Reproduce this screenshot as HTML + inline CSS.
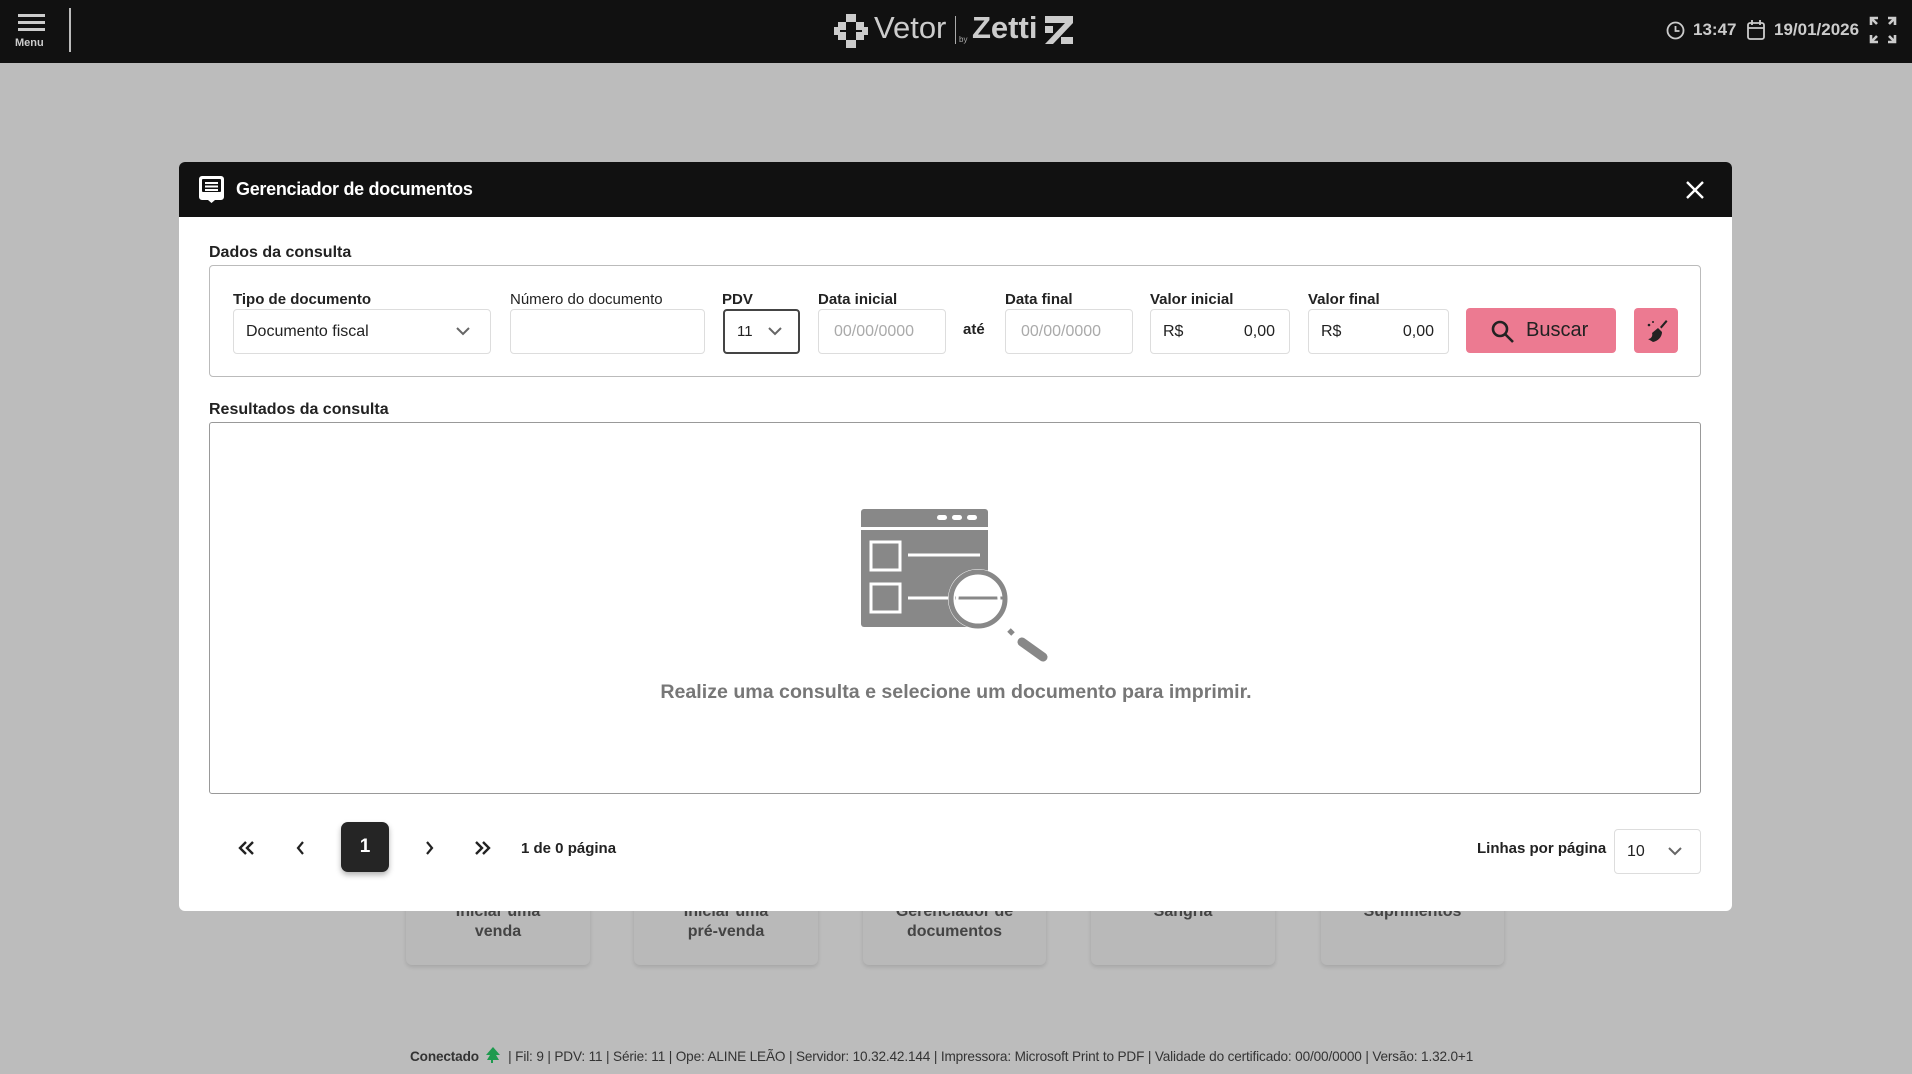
<!DOCTYPE html>
<html><head><meta charset="utf-8"><style>
*{box-sizing:border-box;margin:0;padding:0}
body{width:1912px;height:1074px;background:#bcbcbc;font-family:"Liberation Sans",sans-serif;position:relative;overflow:hidden;color:#222}
.abs{position:absolute}
.hdr{left:0;top:0;width:1912px;height:63px;background:#111}
.card{background:#b9b9b9;border-radius:6px;box-shadow:0 2px 4px rgba(0,0,0,.12);text-align:center;font-weight:bold;font-size:16px;color:#444;line-height:20px}
.modal{left:179px;top:162px;width:1553px;height:749px;background:#fff;border-radius:6px;overflow:hidden}
.mh{left:0;top:0;width:1553px;height:55px;background:#111}
.lbl{font-size:15px;font-weight:bold;color:#222}
.fld{border:1px solid #ddd;border-radius:4px;height:45px;top:309px;font-size:16px;color:#222;line-height:43px;padding-left:12px}
.ph{color:#aaa}
</style></head><body>
<div class="abs hdr">
  <div class="abs" style="left:18px;top:14px;width:27px;height:3px;background:#ccc"></div>
  <div class="abs" style="left:18px;top:21px;width:27px;height:3px;background:#ccc"></div>
  <div class="abs" style="left:18px;top:28px;width:27px;height:3px;background:#ccc"></div>
  <div class="abs" style="left:15px;top:37px;font-size:11px;color:#ccc;font-weight:bold">Menu</div>
  <div class="abs" style="left:69px;top:8px;width:2px;height:44px;background:#bbb"></div>
  <svg class="abs" style="left:834px;top:14px" width="34" height="34" viewBox="0 0 34 34" fill="#ccc"><rect x="12" y="0" width="10" height="8"/><rect x="4" y="8" width="8" height="8"/><rect x="22" y="8" width="8" height="8"/><rect x="0" y="13" width="6" height="8"/><rect x="28" y="13" width="6" height="8"/><rect x="4" y="18" width="8" height="8"/><rect x="22" y="18" width="8" height="8"/><rect x="12" y="26" width="10" height="8"/></svg>
  <div class="abs" style="left:874px;top:10px;font-size:31px;color:#ccc;letter-spacing:0px">Vetor</div>
  <div class="abs" style="left:955px;top:16px;width:1px;height:28px;background:#aaa"></div>
  <div class="abs" style="left:959px;top:35px;font-size:8px;color:#aaa">by</div>
  <div class="abs" style="left:972px;top:10px;font-size:31px;color:#ccc;font-weight:bold">Zetti</div>
  <svg class="abs" style="left:1045px;top:16px" width="28" height="28" viewBox="0 0 28 28" fill="#ccc"><rect x="0" y="0" width="28" height="7"/><path d="M20 7h8L8 28H0z"/><rect x="0" y="10" width="8" height="7"/><rect x="16" y="21" width="12" height="7"/></svg>
  <svg class="abs" style="left:1666px;top:21px" width="19" height="19" viewBox="0 0 19 19" fill="none" stroke="#ccc" stroke-width="1.8"><circle cx="9.5" cy="9.5" r="8"/><path d="M9.5 5v5h4"/></svg>
  <div class="abs" style="left:1693px;top:20px;font-size:17px;font-weight:bold;color:#ccc">13:47</div>
  <svg class="abs" style="left:1747px;top:20px" width="18" height="20" viewBox="0 0 18 20" fill="none" stroke="#ccc" stroke-width="1.8"><rect x="1" y="3" width="16" height="16" rx="2"/><path d="M1 8h16M5 0v5M13 0v5"/></svg>
  <div class="abs" style="left:1774px;top:20px;font-size:17px;font-weight:bold;color:#ccc">19/01/2026</div>
  <svg class="abs" style="left:1869px;top:16px" width="28" height="28" viewBox="0 0 28 28" fill="none" stroke="#ccc" stroke-width="2.6"><path d="M2 9V2h7M2 2l6 6M19 2h7v7M26 2l-6 6M2 19v7h7M2 26l6-6M26 19v7h-7M26 26l-6-6"/></svg>
</div>

<div class="abs card" style="left:406px;top:890px;width:184px;height:75px;padding-top:12px">Iniciar uma<br>venda</div>
<div class="abs card" style="left:634px;top:890px;width:184px;height:75px;padding-top:12px">Iniciar uma<br>pré-venda</div>
<div class="abs card" style="left:863px;top:890px;width:183px;height:75px;padding-top:12px">Gerenciador de<br>documentos</div>
<div class="abs card" style="left:1091px;top:890px;width:184px;height:75px;padding-top:12px">Sangria</div>
<div class="abs card" style="left:1321px;top:890px;width:183px;height:75px;padding-top:12px">Suprimentos</div>

<div class="abs" style="left:410px;top:1046px;font-size:13.6px;letter-spacing:-0.15px;color:#333;white-space:nowrap"><b>Conectado</b> <span style="display:inline-block;width:22px;height:16px;vertical-align:-3px"><svg width="20" height="18" viewBox="0 0 20 18"><path d="M10 1L3 9h4l-3 5h12l-3-5h4z" fill="#1e9a4e"/><path d="M9 13v4" stroke="#1e9a4e" stroke-width="2"/></svg></span> | Fil: 9 | PDV: 11 | Série: 11 | Ope: ALINE LEÃO | Servidor: 10.32.42.144 | Impressora: Microsoft Print to PDF | Validade do certificado: 00/00/0000 | Versão: 1.32.0+1</div>

<div class="abs modal">
  <div class="abs mh">
    <svg class="abs" style="left:20px;top:14px" width="25" height="27" viewBox="0 0 25 27"><path d="M3 0h19a3 3 0 0 1 3 3v18a3 3 0 0 1-3 3h-6l-3.5 3-3.5-3H3a3 3 0 0 1-3-3V3a3 3 0 0 1 3-3z" fill="#fff"/><rect x="3" y="3" width="19" height="13" rx="1" fill="#111"/><path d="M6 7h13M6 10.5h13M6 14h13" stroke="#fff" stroke-width="2"/></svg>
    <div class="abs" style="left:57px;top:17px;font-size:18px;font-weight:bold;color:#fff;letter-spacing:-0.3px">Gerenciador de documentos</div>
    <svg class="abs" style="left:1507px;top:19px" width="18" height="18" viewBox="0 0 18 18" stroke="#fff" stroke-width="2.4"><path d="M1 1l16 16M17 1L1 17"/></svg>
  </div>
</div>
<div class="abs lbl" style="left:209px;top:244px;font-size:16px">Dados da consulta</div>
<div class="abs" style="left:209px;top:265px;width:1492px;height:112px;border:1px solid #bbb;border-radius:4px"></div>
<div class="abs lbl" style="left:233px;top:291px">Tipo de documento</div>
<div class="abs lbl" style="left:510px;top:291px;font-weight:normal">Número do documento</div>
<div class="abs lbl" style="left:722px;top:291px">PDV</div>
<div class="abs lbl" style="left:818px;top:291px">Data inicial</div>
<div class="abs lbl" style="left:1005px;top:291px">Data final</div>
<div class="abs lbl" style="left:1150px;top:291px">Valor inicial</div>
<div class="abs lbl" style="left:1308px;top:291px">Valor final</div>
<div class="abs fld" style="left:233px;width:258px">Documento fiscal<svg class="abs" style="right:20px;top:17px" width="14" height="9" viewBox="0 0 14 9" fill="none" stroke="#666" stroke-width="2"><path d="M1 1l6 6 6-6"/></svg></div>
<div class="abs fld" style="left:510px;width:195px"></div>
<div class="abs fld" style="left:723px;width:77px;border:2px solid #444;line-height:41px;font-size:15px">11<svg class="abs" style="right:16px;top:16px" width="14" height="9" viewBox="0 0 14 9" fill="none" stroke="#666" stroke-width="2"><path d="M1 1l6 6 6-6"/></svg></div>
<div class="abs fld ph" style="left:818px;width:128px;padding-left:15px">00/00/0000</div>
<div class="abs lbl" style="left:963px;top:321px">até</div>
<div class="abs fld ph" style="left:1005px;width:128px;padding-left:15px">00/00/0000</div>
<div class="abs fld" style="left:1150px;width:140px">R$<span style="position:absolute;right:14px">0,00</span></div>
<div class="abs fld" style="left:1308px;width:141px">R$<span style="position:absolute;right:14px">0,00</span></div>
<div class="abs" style="left:1466px;top:308px;width:150px;height:45px;background:#ec7a91;border-radius:4px;font-size:20px;color:#222;line-height:45px;padding-left:60px">Buscar<svg class="abs" style="left:25px;top:12px" width="24" height="24" viewBox="0 0 24 24" fill="none" stroke="#222" stroke-width="2.6"><circle cx="9" cy="9" r="7"/><path d="M14 14l8 8"/></svg></div>
<div class="abs" style="left:1634px;top:308px;width:44px;height:45px;background:#ec7a91;border-radius:4px"><svg class="abs" style="left:11px;top:11px" width="24" height="24" viewBox="0 0 24 24" fill="#222"><path d="M21 1l1.5 1.5-6 7-1.5-1.5z"/><path d="M13 9l4 4c0 5-4 9-9 10L3 20c3 0 5-3 4-6z"/><circle cx="4" cy="6" r="1.3"/><circle cx="8" cy="3" r="1"/></svg></div>

<div class="abs lbl" style="left:209px;top:401px;font-size:16px">Resultados da consulta</div>
<div class="abs" style="left:209px;top:422px;width:1492px;height:372px;border:1px solid #999;border-radius:3px"></div>
<svg class="abs" style="left:858px;top:505px" width="195" height="160" viewBox="858 505 195 160">
  <rect x="861" y="509" width="127" height="118" rx="3" fill="#888"/>
  <rect x="861" y="527" width="127" height="3" fill="#fff"/>
  <rect x="937" y="515" width="10" height="5" rx="2.5" fill="#fff"/><rect x="952" y="515" width="10" height="5" rx="2.5" fill="#fff"/><rect x="967" y="515" width="10" height="5" rx="2.5" fill="#fff"/>
  <rect x="871" y="542" width="29" height="28" fill="none" stroke="#fff" stroke-width="3"/>
  <rect x="871" y="584" width="29" height="28" fill="none" stroke="#fff" stroke-width="3"/>
  <path d="M908 555h72M908 598h72" stroke="#fff" stroke-width="3"/>
  <circle cx="978" cy="599" r="30" fill="#fff"/>
  <circle cx="978" cy="599" r="27" fill="none" stroke="#888" stroke-width="5"/>
  <path d="M955 598h49" stroke="#888" stroke-width="3"/>
  <circle cx="978" cy="599" r="21" fill="none" stroke="#fff" stroke-width="3"/>
  <path d="M1009 630l4 4" stroke="#888" stroke-width="5"/>
  <path d="M1022 642l21 15" stroke="#888" stroke-width="9" stroke-linecap="round"/>
</svg>
<div class="abs" style="left:0;width:1912px;top:681px;text-align:center;font-size:19.6px;font-weight:bold;color:#777">Realize uma consulta e selecione um documento para imprimir.</div>

<svg class="abs" style="left:237px;top:840px" width="18" height="16" viewBox="0 0 18 16" fill="none" stroke="#222" stroke-width="2.4"><path d="M9 2L3 8l6 6M16 2l-6 6 6 6"/></svg>
<svg class="abs" style="left:296px;top:841px" width="10" height="14" viewBox="0 0 10 14" fill="none" stroke="#222" stroke-width="2.2"><path d="M7 1L2 7l5 6"/></svg>
<div class="abs" style="left:341px;top:822px;width:48px;height:50px;background:#252525;border-radius:7px;box-shadow:0 3px 6px rgba(0,0,0,.3);color:#fff;font-size:19px;font-weight:bold;text-align:center;line-height:50px">1</div>
<svg class="abs" style="left:424px;top:841px" width="10" height="14" viewBox="0 0 10 14" fill="none" stroke="#222" stroke-width="2.2"><path d="M3 1l5 6-5 6"/></svg>
<svg class="abs" style="left:474px;top:840px" width="18" height="16" viewBox="0 0 18 16" fill="none" stroke="#222" stroke-width="2.4"><path d="M2 2l6 6-6 6M9 2l6 6-6 6"/></svg>
<div class="abs" style="left:521px;top:840px;font-size:15px;font-weight:bold">1 de 0 página</div>
<div class="abs" style="left:1477px;top:840px;font-size:15px;font-weight:bold">Linhas por página</div>
<div class="abs" style="left:1614px;top:829px;width:87px;height:45px;border:1px solid #ddd;border-radius:4px;font-size:16px;line-height:43px;padding-left:12px">10<svg class="abs" style="right:18px;top:17px" width="14" height="9" viewBox="0 0 14 9" fill="none" stroke="#666" stroke-width="2"><path d="M1 1l6 6 6-6"/></svg></div>
</body></html>
